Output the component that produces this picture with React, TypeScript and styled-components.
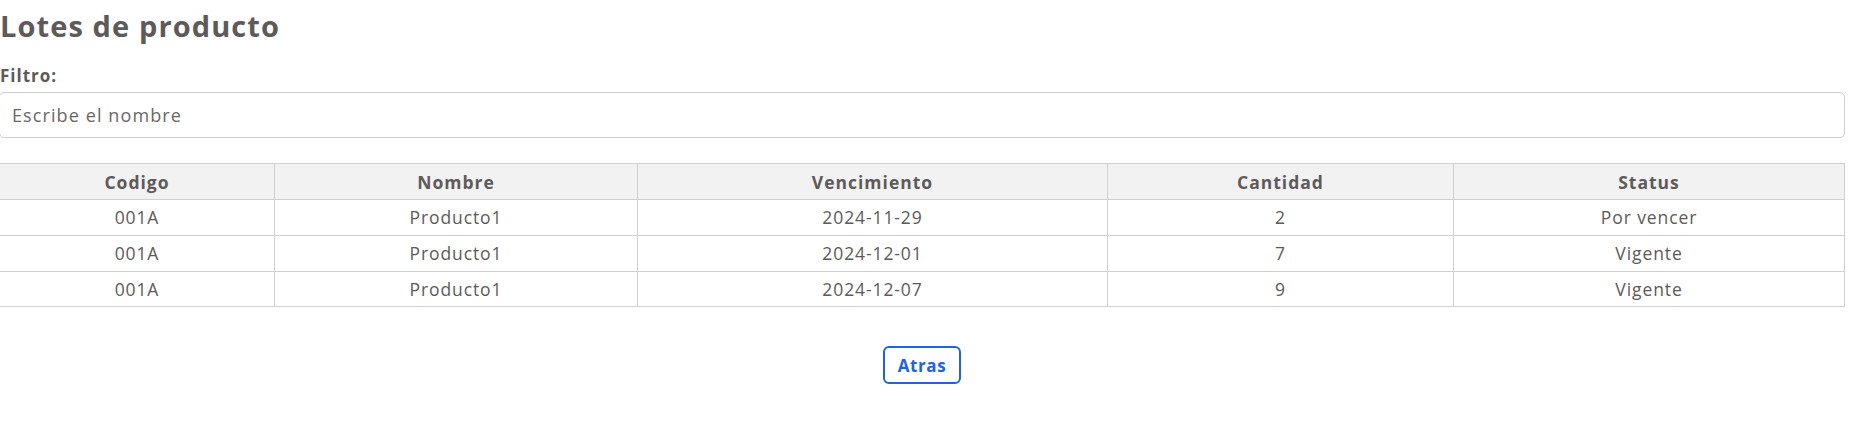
import React from "react";
import styled, { createGlobalStyle } from "styled-components";

const GlobalStyle = createGlobalStyle`
  html, body {
    margin: 0;
    padding: 0;
    background: #ffffff;
  }
  body {
    font-family: "Open Sans", "DejaVu Sans", sans-serif;
    color: #5e5a5a;
  }
  * { box-sizing: border-box; }
`;

const Page = styled.div`
  display: flex;
  flex-direction: column;
  margin-left: -1px;
  padding: 0 15px 0 0;
  width: 1861px;
`;

const Title = styled.h1`
  margin: 8px 0 0 1px;
  font-size: 29px;
  line-height: 36px;
  font-weight: 700;
  color: #5e5a5a;
  letter-spacing: 1.1px;
`;

const FilterLabel = styled.label`
  margin: 22px 0 0 1px;
  font-size: 17px;
  line-height: 20px;
  font-weight: 700;
  letter-spacing: 1px;
  color: #5e5a5a;
`;

const FilterInput = styled.input`
  margin-top: 6px;
  height: 46px;
  width: 100%;
  padding: 0 12px;
  border: 1px solid #d0d0d0;
  border-radius: 5px;
  font-family: inherit;
  font-size: 18px;
  letter-spacing: 1.1px;
  color: #5e5a5a;
  outline: none;
  &::placeholder {
    color: #6b6767;
  }
`;

const Table = styled.table`
  margin-top: 25px;
  width: 100%;
  border-collapse: collapse;
  table-layout: fixed;
  font-size: 17.5px;
  color: #5e5a5a;
`;

const HeadCell = styled.th<{ $w: number }>`
  width: ${(p) => p.$w}px;
  height: 36px;
  padding: 0;
  background: #f2f2f2;
  border: 1px solid #d0d0d0;
  font-weight: 700;
  letter-spacing: 1px;
  text-align: center;
`;

const Cell = styled.td`
  height: 35.75px;
  padding: 0;
  border: 1px solid #d0d0d0;
  text-align: center;
  font-weight: 400;
  letter-spacing: 0.9px;
`;

const Actions = styled.div`
  display: flex;
  justify-content: center;
  margin-top: 39px;
`;

const BackButton = styled.button`
  width: 78px;
  height: 38px;
  padding: 0;
  background: #ffffff;
  border: 2px solid #1f63df;
  border-radius: 6px;
  color: #1f63df;
  font-family: inherit;
  font-size: 17px;
  font-weight: 700;
  letter-spacing: 0.6px;
  cursor: pointer;
`;

const columns = [
  { label: "Codigo", w: 275 },
  { label: "Nombre", w: 363 },
  { label: "Vencimiento", w: 470 },
  { label: "Cantidad", w: 346 },
  { label: "Status", w: 391 },
];

const rows = [
  ["001A", "Producto1", "2024-11-29", "2", "Por vencer"],
  ["001A", "Producto1", "2024-12-01", "7", "Vigente"],
  ["001A", "Producto1", "2024-12-07", "9", "Vigente"],
];

export default function App() {
  return (
    <>
      <GlobalStyle />
      <Page>
        <Title>Lotes de producto</Title>
        <FilterLabel htmlFor="filtro">Filtro:</FilterLabel>
        <FilterInput id="filtro" placeholder="Escribe el nombre" />
        <Table>
          <thead>
            <tr>
              {columns.map((c) => (
                <HeadCell key={c.label} $w={c.w}>
                  {c.label}
                </HeadCell>
              ))}
            </tr>
          </thead>
          <tbody>
            {rows.map((r, i) => (
              <tr key={i}>
                {r.map((v, j) => (
                  <Cell key={j}>{v}</Cell>
                ))}
              </tr>
            ))}
          </tbody>
        </Table>
        <Actions>
          <BackButton>Atras</BackButton>
        </Actions>
      </Page>
    </>
  );
}
